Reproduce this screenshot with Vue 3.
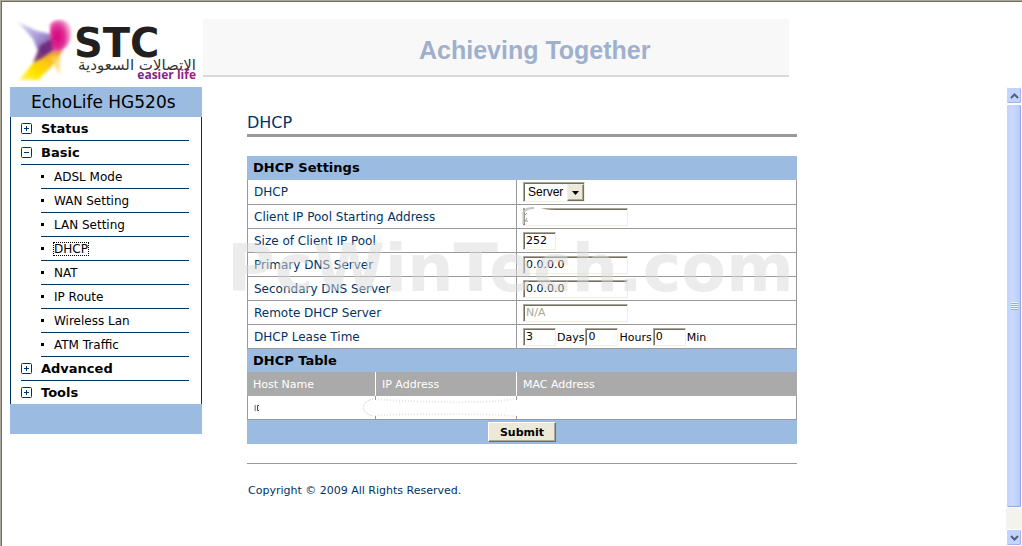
<template>
  <div class="page">
    <header class="header">
      <svg class="logo" viewBox="0 0 188 62" role="img" aria-label="STC">
        <defs>
          <filter id="soft" x="-30%" y="-30%" width="160%" height="160%">
            <feGaussianBlur stdDeviation="1.7" />
          </filter>
          <linearGradient id="wing" x1="0" y1="0" x2="1" y2="1">
            <stop offset="0" stop-color="#dcdcf6" />
            <stop offset="0.45" stop-color="#a99bd6" />
            <stop offset="1" stop-color="#5b1f86" />
          </linearGradient>
          <radialGradient id="head" cx="0.4" cy="0.5" r="0.6">
            <stop offset="0" stop-color="#d6007f" />
            <stop offset="0.55" stop-color="#df2f95" />
            <stop offset="1" stop-color="#f7bcdb" />
          </radialGradient>
          <linearGradient id="tail" x1="1" y1="0" x2="0" y2="1">
            <stop offset="0" stop-color="#f08a3c" />
            <stop offset="0.4" stop-color="#fdc60b" />
            <stop offset="0.75" stop-color="#ffe800" />
            <stop offset="1" stop-color="#fff27a" />
          </linearGradient>
          <linearGradient id="life" x1="0" x2="1">
            <stop offset="0" stop-color="#6a2a86" />
            <stop offset="1" stop-color="#a01f7c" />
          </linearGradient>
        </defs>
        <g filter="url(#soft)">
          <path d="M3 3 L22 12 L35 15 L44 26 L36 38 L24 34 L18 20 Z" fill="url(#wing)" />
          <path d="M35 5 C42 -2 53 0 56 10 C58 21 52 28 46 32 L33 36 L35 20 Z" fill="url(#head)" />
          <path d="M24 36 L48 31 L40 44 L23 61 L4 61 C12 52 18 44 24 36 Z" fill="url(#tail)" />
          <path d="M35 38 L46 36 L44 56 Z" fill="#fdd75a" opacity="0.7" />
          <path d="M25 26 L36 20 L38 32 L27 40 L18 44 Z" fill="#6b2277" opacity="0.85" />
        </g>
        <text class="logo-name" x="59" y="38">STC</text>
        <text class="logo-arabic" x="181" y="51">الاتصالات السعودية</text>
        <text class="logo-slogan" x="181" y="60">easier life</text>
      </svg>
      <div class="banner">Achieving Together</div>
    </header>

    <div class="body">
      <nav class="sidebar">
        <div class="model">EchoLife HG520s</div>
        <ul class="menu">
          <li v-for="item in menu" :key="item.name">
            <a href="#" class="menu-item">
              <svg class="toggle" viewBox="0 0 11 11">
                <rect x="0.5" y="0.5" width="10" height="10" rx="1" />
                <path :d="item.children ? 'M3 5.5H8' : 'M3 5.5H8M5.5 3V8'" />
              </svg>
              {{ item.name }}
            </a>
            <ul v-if="item.children" class="submenu">
              <li v-for="child in item.children" :key="child">
                <a href="#" :class="{ active: child === current }" @click.prevent="current = child"><span>{{ child }}</span></a>
              </li>
            </ul>
          </li>
        </ul>
        <div class="sidebar-foot"></div>
      </nav>

      <main class="content">
        <h1>DHCP</h1>
        <form @submit.prevent>
          <h2>DHCP Settings</h2>
          <table class="settings">
            <tbody>
              <tr>
                <th><label for="mode">DHCP</label></th>
                <td>
                  <div class="select">
                    <select id="mode" v-model="mode">
                      <option>None</option>
                      <option>Server</option>
                      <option>Relay</option>
                    </select>
                    <span class="arrow">
                      <svg viewBox="0 0 7 4"><path d="M0 0H7L3.5 4Z" /></svg>
                    </span>
                  </div>
                </td>
              </tr>
              <tr v-for="field in fields" :key="field.id">
                <th><label :for="field.id">{{ field.label }}</label></th>
                <td>
                  <div class="field">
                    <input :id="field.id" v-model="field.value" type="text" :class="{ short: field.short }" :disabled="field.disabled">
                    <svg v-if="field.id === 'start'" class="smudge" viewBox="0 0 34 20">
                      <path d="M3 0 H16 Q22 3 34 3 V16 C24 16 18 19 3 17 Z" fill="#fff" />
                      <path d="M1.500 17 V5 Q4 1 12 1" fill="none" stroke="#c4c4c0" stroke-width="2" />
                      <path d="M5 6 L3 8 M5 11 L3 14 H6" fill="none" stroke="#999" />
                    </svg>
                  </div>
                </td>
              </tr>
              <tr>
                <th><label for="days">DHCP Lease Time</label></th>
                <td>
                  <div class="lease">
                    <input id="days" v-model="days" type="text" class="short"><label for="days">Days</label>
                    <input id="hours" v-model="hours" type="text" class="short"><label for="hours">Hours</label>
                    <input id="minutes" v-model="minutes" type="text" class="short"><label for="minutes">Min</label>
                  </div>
                </td>
              </tr>
            </tbody>
          </table>

          <h2>DHCP Table</h2>
          <table class="clients">
            <thead>
              <tr>
                <th>Host Name</th>
                <th>IP Address</th>
                <th>MAC Address</th>
              </tr>
            </thead>
            <tbody>
              <tr>
                <td>
                  <svg class="blot" viewBox="0 0 8 8">
                    <path d="M0.500 1V7" stroke="#ccc" />
                    <path d="M1.500 1V7" stroke="#999" />
                    <path d="M5 1.500H3.500V6.500H5" fill="none" stroke="#444" />
                  </svg>
                </td>
                <td>
                  <svg class="erased" viewBox="0 0 156 23">
                    <path d="M12 3 C-1 6 -1 17 12 20" fill="none" stroke="#ccc" stroke-dasharray="1 1" />
                    <path d="M14 3 Q30 5 80 6 T153 3M14 20 Q30 18 80 18 T153 20" fill="none" stroke="#e4e4e4" stroke-width="2" stroke-dasharray="1 2" />
                    <path d="M14.500 0V4M14.500 20V23M155.500 0V4M155.500 20V23" stroke="#999" />
                  </svg>
                </td>
                <td></td>
              </tr>
            </tbody>
          </table>
          <div class="actions"><button type="submit">Submit</button></div>
        </form>
        <footer>Copyright © 2009 All Rights Reserved.</footer>
        <div class="watermark">PcWinTech.com</div>
      </main>

      <div class="scrollbar">
        <button type="button" aria-label="Scroll up">
          <svg viewBox="0 0 9 6"><path d="M1 5L4.500 1.500L8 5" /></svg>
        </button>
        <div class="track">
          <div class="thumb"><i></i></div>
        </div>
        <button type="button" aria-label="Scroll down">
          <svg viewBox="0 0 9 6"><path d="M1 1L4.500 4.500L8 1" /></svg>
        </button>
      </div>
    </div>
  </div>
</template>

<script setup>
import { ref } from 'vue';

const menu = [
  { name: 'Status' },
  {
    name: 'Basic',
    children: ['ADSL Mode', 'WAN Setting', 'LAN Setting', 'DHCP', 'NAT', 'IP Route', 'Wireless Lan', 'ATM Traffic'],
  },
  { name: 'Advanced' },
  { name: 'Tools' },
];
const current = ref('DHCP');

const mode = ref('Server');
const fields = ref([
  { id: 'start', label: 'Client IP Pool Starting Address', value: '' },
  { id: 'size', label: 'Size of Client IP Pool', value: '252', short: true },
  { id: 'dns1', label: 'Primary DNS Server', value: '0.0.0.0' },
  { id: 'dns2', label: 'Secondary DNS Server', value: '0.0.0.0' },
  { id: 'remote', label: 'Remote DHCP Server', value: 'N/A', disabled: true },
]);
const days = ref('3');
const hours = ref('0');
const minutes = ref('0');
</script>

<style>
body {
  background: #fff;
}
</style>

<style scoped>
* {
  box-sizing: border-box;
}

.page {
  display: flex;
  flex-direction: column;
  min-height: 100vh;
  border-top: 1px solid #aca899;
  border-left: 1px solid #aca899;
  box-shadow: inset 1px 1px 0 #716f64;
  font-family: Verdana, "DejaVu Sans", sans-serif;
  font-size: 11px;
  color: #000;
}

ul {
  list-style: none;
  margin: 0;
  padding: 0;
}

a {
  color: #000;
  text-decoration: none;
}

/* header */
.header {
  display: flex;
  padding: 18px 16px 6px 14px;
}

.logo {
  flex: none;
  width: 188px;
  height: 62px;
}

.logo-name {
  font: bold 40px "DejaVu Sans", sans-serif;
  fill: #231f20;
}

.logo-arabic {
  font: 15px "DejaVu Sans", sans-serif;
  fill: #333;
  direction: rtl;
}

.logo-slogan {
  font: bold 12px "Open Sans", sans-serif;
  fill: url(#life);
  text-anchor: end;
}

.banner {
  flex: 0 1 586px;
  height: 58px;
  padding-left: 216px;
  background: #f8f8f8;
  border-bottom: 2px solid #d8d8d8;
  color: #9fb0cd;
  font: bold 25px/62px "Liberation Sans", Arial, sans-serif;
  white-space: nowrap;
}

/* body */
.body {
  flex: 1;
  display: flex;
  padding-left: 9px;
}

.sidebar {
  flex: none;
  width: 192px;
}

.model {
  height: 30px;
  background: #9bbbe1;
  font-size: 17px;
  line-height: 30px;
  padding-left: 21px;
}

.menu {
  border: solid #036;
  border-width: 0 1px;
  padding: 0 12px 0 10px;
}

.menu-item {
  display: flex;
  align-items: center;
  gap: 9px;
  height: 24px;
  border-bottom: 1px solid #036;
  font-size: 13px;
  font-weight: bold;
}

.menu > li:last-child .menu-item {
  height: 23px;
  border-bottom: 0;
}

.toggle {
  width: 11px;
  height: 11px;
}

.toggle rect,
.toggle path {
  fill: none;
  stroke: #036;
}

.submenu {
  padding-left: 20px;
}

.submenu a {
  display: flex;
  align-items: center;
  gap: 10px;
  height: 24px;
  border-bottom: 1px solid #036;
  font-size: 12px;
}

.submenu a::before {
  content: "";
  width: 3px;
  height: 3px;
  background: #000;
}

.submenu a.active span {
  outline: 1px dotted #000;
  line-height: 12px;
}

.sidebar-foot {
  height: 30px;
  background: #9bbbe1;
}

/* content */
.content {
  position: relative;
  flex: 0 1 550px;
  margin-left: 45px;
  margin-right: auto;
}

h1 {
  margin: 24px 0 19px;
  border-bottom: 3px solid #999;
  color: #036;
  font-size: 16px;
  font-weight: normal;
  line-height: 23px;
}

h2 {
  margin: 0;
  padding-left: 6px;
  background: #9bbbe1;
  font-size: 13px;
  line-height: 24px;
}

table {
  width: 100%;
  border-spacing: 0;
  table-layout: fixed;
}

th,
td {
  height: 24px;
  padding: 0 6px;
  text-align: left;
  font-weight: normal;
}

.settings {
  border-left: 1px solid #999;
}

.settings th,
.settings td {
  border: solid #999;
  border-width: 0 1px 1px 0;
}

.settings th {
  width: 269px;
  color: #036;
  font-size: 12px;
}

.settings tr:first-child > * {
  height: 25px;
}

.settings + h2 {
  line-height: 23px;
}

input {
  display: block;
  width: 105px;
  height: 18px;
  padding: 0 2px;
  border: 1px solid;
  border-color: #aca899 #f1efe2 #f1efe2 #aca899;
  box-shadow: inset 1px 1px 0 #716f64;
  background: #fff;
  color: #000;
  font: 11px Verdana, "DejaVu Sans", sans-serif;
}

input.short {
  width: 33px;
}

input:disabled {
  color: #aca899;
}

.field {
  position: relative;
}

.smudge {
  position: absolute;
  left: -1px;
  top: -1px;
  width: 34px;
  height: 20px;
}

.select {
  display: inline-grid;
  vertical-align: middle;
  width: 62px;
  height: 20px;
  border: 1px solid;
  border-color: #aca899 #f1efe2 #f1efe2 #aca899;
  box-shadow: inset 1px 1px 0 #716f64;
}

.select select {
  grid-area: 1 / 1;
  appearance: none;
  padding: 0 0 0 4px;
  border: 0;
  background: none;
  color: #000;
  font: 12px "Liberation Sans", Arial, sans-serif;
}

.arrow {
  grid-area: 1 / 1;
  justify-self: end;
  display: grid;
  place-items: center;
  width: 17px;
  margin-top: 1px;
  background: #ece9d8;
  border: 1px solid;
  border-color: #f1efe2 #716f64 #716f64 #f1efe2;
  box-shadow: inset -1px -1px 0 #aca899;
  pointer-events: none;
}

.arrow svg {
  width: 7px;
  height: 4px;
}

.lease {
  display: flex;
  align-items: center;
}

.lease label {
  padding: 2px 1px 0;
}

/* clients table */
.clients th {
  background: #aaa;
  border-right: 1px solid #fff;
  color: #fff;
}

.clients th:nth-child(1) {
  width: 129px;
}

.clients th:nth-child(2) {
  width: 141px;
}

.clients th:last-child {
  border-right-color: #aaa;
}

.clients td {
  border-bottom: 1px solid #999;
}

.clients td:first-child {
  border-left: 1px solid #999;
}

.clients td:nth-child(2) {
  position: relative;
}

.clients td:last-child {
  border-right: 1px solid #999;
}

.blot {
  display: block;
  width: 8px;
  height: 8px;
}

.erased {
  position: absolute;
  right: 0;
  top: 0;
  width: 156px;
  height: 23px;
}

.actions {
  display: flex;
  justify-content: center;
  padding: 2px 0;
  background: #9bbbe1;
}

.actions button {
  width: 68px;
  height: 20px;
  padding: 0;
  background: #ece9d8;
  border: 1px solid;
  border-color: #fff #716f64 #716f64 #fff;
  box-shadow: inset -1px -1px 0 #aca899;
  color: #000;
  font: bold 11px Verdana, "DejaVu Sans", sans-serif;
}

footer {
  margin-top: 19px;
  padding: 20px 1px;
  border-top: 1px solid #999;
  color: #036;
  line-height: 14px;
}

.watermark {
  position: absolute;
  left: -20px;
  top: 146px;
  color: rgba(217, 217, 217, 0.5);
  font: bold 65px/72px "DejaVu Sans", sans-serif;
  pointer-events: none;
}

/* scrollbar */
.scrollbar {
  display: flex;
  flex-direction: column;
  flex: none;
  width: 16px;
  background: #f3f2ec;
}

.scrollbar button {
  display: grid;
  place-items: center;
  height: 17px;
  padding: 0;
  background: #c3d3fd;
  border: 1px solid #fff;
  border-radius: 2px;
  box-shadow: inset -1px -1px 0 #9db5ea;
}

.scrollbar button svg {
  width: 9px;
  height: 6px;
  fill: none;
  stroke: #4d6185;
  stroke-width: 2;
}

.track {
  flex: 1;
  display: flex;
  flex-direction: column;
}

.thumb {
  display: grid;
  place-items: center;
  height: 95%;
  background: linear-gradient(90deg, #c3d3fd, #cbd9fe 40%, #b5cbfa);
  border: 1px solid #fff;
  border-radius: 2px;
  box-shadow: inset -1px -1px 0 #8faae8;
}

.thumb i {
  width: 7px;
  height: 8px;
  background: repeating-linear-gradient(#eef4fe 0 1px, #8cb0f8 1px 2px);
}
</style>
